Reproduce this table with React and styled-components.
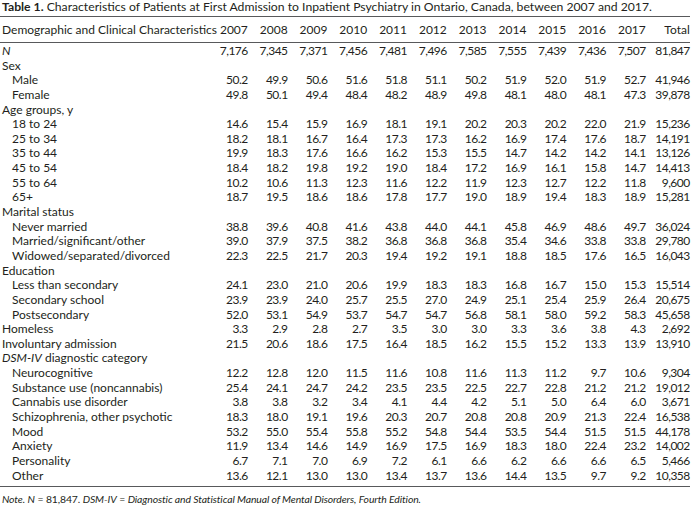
import React from "react";
import styled, { createGlobalStyle } from "styled-components";

const Global = createGlobalStyle`
  html, body { margin: 0; padding: 0; background: #fff; }
  body { font-family: "Lato", "Open Sans", sans-serif; color: #231f20; }
`;

const Page = styled.div`
  width: 694px;
  height: 509px;
  overflow: hidden;
`;

const Title = styled.div`
  font-size: 12.2px;
  line-height: 14px;
  padding-left: 2px;
  height: 16px;
  white-space: nowrap;
  b { font-weight: 700; }
`;

const Table = styled.div`
  width: 690px;
  font-size: 12px;
  border-top: 1px solid #58595b;
  border-bottom: 1px solid #58595b;
  padding: 0 0 3px;
`;

const Grid = styled.div`
  display: grid;
  grid-template-columns: 208px repeat(11, 39.8px) 44px;
  align-items: center;
`;

const HeadRow = styled(Grid)`
  height: 25px;
  border-bottom: 1px solid #58595b;
  margin-bottom: 1px;
`;

const Cell = styled.div`
  text-align: ${(p) => (p.$left ? "left" : "right")};
  padding-left: ${(p) => (p.$left ? "2px" : "0")};
  white-space: nowrap;
`;

const Row = styled(Grid)`
  height: 14.65px;
  line-height: 14.65px;
`;

const Label = styled.div`
  padding-left: ${(p) => (p.$indent ? "12px" : "2px")};
  white-space: nowrap;
  i { font-style: italic; }
`;

const Num = styled.div`
  text-align: right;
  white-space: nowrap;
  letter-spacing: -0.5px;
`;

const Note = styled.div`
  font-size: 10.4px;
  line-height: 12px;
  padding: 6px 0 0 2px;
  white-space: nowrap;
  letter-spacing: -0.1px;
  i { font-style: italic; }
`;

const years = ["2007","2008","2009","2010","2011","2012","2013","2014","2015","2016","2017"];

const rows = [
  { label: <i>N</i>, v: "7,176 7,345 7,371 7,456 7,481 7,496 7,585 7,555 7,439 7,436 7,507 81,847" },
  { label: "Sex" },
  { label: "Male", indent: true, v: "50.2 49.9 50.6 51.6 51.8 51.1 50.2 51.9 52.0 51.9 52.7 41,946" },
  { label: "Female", indent: true, v: "49.8 50.1 49.4 48.4 48.2 48.9 49.8 48.1 48.0 48.1 47.3 39,878" },
  { label: "Age groups, y" },
  { label: "18 to 24", indent: true, v: "14.6 15.4 15.9 16.9 18.1 19.1 20.2 20.3 20.2 22.0 21.9 15,236" },
  { label: "25 to 34", indent: true, v: "18.2 18.1 16.7 16.4 17.3 17.3 16.2 16.9 17.4 17.6 18.7 14,191" },
  { label: "35 to 44", indent: true, v: "19.9 18.3 17.6 16.6 16.2 15.3 15.5 14.7 14.2 14.2 14.1 13,126" },
  { label: "45 to 54", indent: true, v: "18.4 18.2 19.8 19.2 19.0 18.4 17.2 16.9 16.1 15.8 14.7 14,413" },
  { label: "55 to 64", indent: true, v: "10.2 10.6 11.3 12.3 11.6 12.2 11.9 12.3 12.7 12.2 11.8 9,600" },
  { label: "65+", indent: true, v: "18.7 19.5 18.6 18.6 17.8 17.7 19.0 18.9 19.4 18.3 18.9 15,281" },
  { label: "Marital status" },
  { label: "Never married", indent: true, v: "38.8 39.6 40.8 41.6 43.8 44.0 44.1 45.8 46.9 48.6 49.7 36,024" },
  { label: "Married/significant/other", indent: true, v: "39.0 37.9 37.5 38.2 36.8 36.8 36.8 35.4 34.6 33.8 33.8 29,780" },
  { label: "Widowed/separated/divorced", indent: true, v: "22.3 22.5 21.7 20.3 19.4 19.2 19.1 18.8 18.5 17.6 16.5 16,043" },
  { label: "Education" },
  { label: "Less than secondary", indent: true, v: "24.1 23.0 21.0 20.6 19.9 18.3 18.3 16.8 16.7 15.0 15.3 15,514" },
  { label: "Secondary school", indent: true, v: "23.9 23.9 24.0 25.7 25.5 27.0 24.9 25.1 25.4 25.9 26.4 20,675" },
  { label: "Postsecondary", indent: true, v: "52.0 53.1 54.9 53.7 54.7 54.7 56.8 58.1 58.0 59.2 58.3 45,658" },
  { label: "Homeless", v: "3.3 2.9 2.8 2.7 3.5 3.0 3.0 3.3 3.6 3.8 4.3 2,692" },
  { label: "Involuntary admission", v: "21.5 20.6 18.6 17.5 16.4 18.5 16.2 15.5 15.2 13.3 13.9 13,910" },
  { label: <><i>DSM-IV</i> diagnostic category</> },
  { label: "Neurocognitive", indent: true, v: "12.2 12.8 12.0 11.5 11.6 10.8 11.6 11.3 11.2 9.7 10.6 9,304" },
  { label: "Substance use (noncannabis)", indent: true, v: "25.4 24.1 24.7 24.2 23.5 23.5 22.5 22.7 22.8 21.2 21.2 19,012" },
  { label: "Cannabis use disorder", indent: true, v: "3.8 3.8 3.2 3.4 4.1 4.4 4.2 5.1 5.0 6.4 6.0 3,671" },
  { label: "Schizophrenia, other psychotic", indent: true, v: "18.3 18.0 19.1 19.6 20.3 20.7 20.8 20.8 20.9 21.3 22.4 16,538" },
  { label: "Mood", indent: true, v: "53.2 55.0 55.4 55.8 55.2 54.8 54.4 53.5 54.4 51.5 51.5 44,178" },
  { label: "Anxiety", indent: true, v: "11.9 13.4 14.6 14.9 16.9 17.5 16.9 18.3 18.0 22.4 23.2 14,002" },
  { label: "Personality", indent: true, v: "6.7 7.1 7.0 6.9 7.2 6.1 6.6 6.2 6.6 6.6 6.5 5,466" },
  { label: "Other", indent: true, v: "13.6 12.1 13.0 13.0 13.4 13.7 13.6 14.4 13.5 9.7 9.2 10,358" },
];

export default function App() {
  return (
    <Page>
      <Global />
      <Title>
        <b>Table 1.</b> Characteristics of Patients at First Admission to Inpatient Psychiatry in Ontario, Canada, between 2007 and 2017.
      </Title>
      <Table>
        <HeadRow>
          <Cell $left>Demographic and Clinical Characteristics</Cell>
          {years.map((y) => (
            <Cell key={y}>{y}</Cell>
          ))}
          <Cell>Total</Cell>
        </HeadRow>
        {rows.map((r, i) => (
          <Row key={i}>
            <Label $indent={r.indent}>{r.label}</Label>
            {(r.v ? r.v.split(" ") : Array(12).fill("")).map((n, j) => (
              <Num key={j}>{n}</Num>
            ))}
          </Row>
        ))}
      </Table>
      <Note>
        <i>Note.</i> <i>N</i> = 81,847. <i>DSM-IV</i> = <i>Diagnostic and Statistical Manual of Mental Disorders, Fourth Edition.</i>
      </Note>
    </Page>
  );
}
